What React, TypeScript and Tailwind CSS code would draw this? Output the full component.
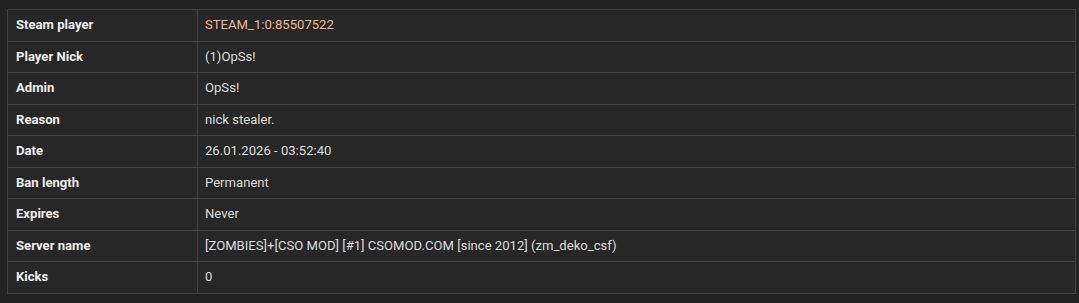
const rows: { label: string; value: string; accent?: boolean }[] = [
  { label: "Steam player", value: "STEAM_1:0:85507522", accent: true },
  { label: "Player Nick", value: "(1)OpSs!" },
  { label: "Admin", value: "OpSs!" },
  { label: "Reason", value: "nick stealer." },
  { label: "Date", value: "26.01.2026 - 03:52:40" },
  { label: "Ban length", value: "Permanent" },
  { label: "Expires", value: "Never" },
  { label: "Server name", value: "[ZOMBIES]+[CSO MOD] [#1] CSOMOD.COM [since 2012] (zm_deko_csf)" },
  { label: "Kicks", value: "0" },
];

export default function App() {
  return (
    <div className="w-[1079px] h-[303px] bg-[#222222] pt-[9px] pl-[7px] font-['Roboto',sans-serif] text-[13.1px]">
      <table className="w-[1069px] border-collapse bg-[#272727]">
        <tbody>
          {rows.map((r) => (
            <tr key={r.label} className="h-[31.5px]">
              <td className="w-[190px] border border-[#434343] pl-[8px] font-bold text-[#eeeeee]">{r.label}</td>
              <td
                className={
                  "border border-[#434343] pl-[7px] " + (r.accent ? "text-[#f0b78f]" : "text-[#dddddd]")
                }
              >
                {r.value}
              </td>
            </tr>
          ))}
        </tbody>
      </table>
    </div>
  );
}
